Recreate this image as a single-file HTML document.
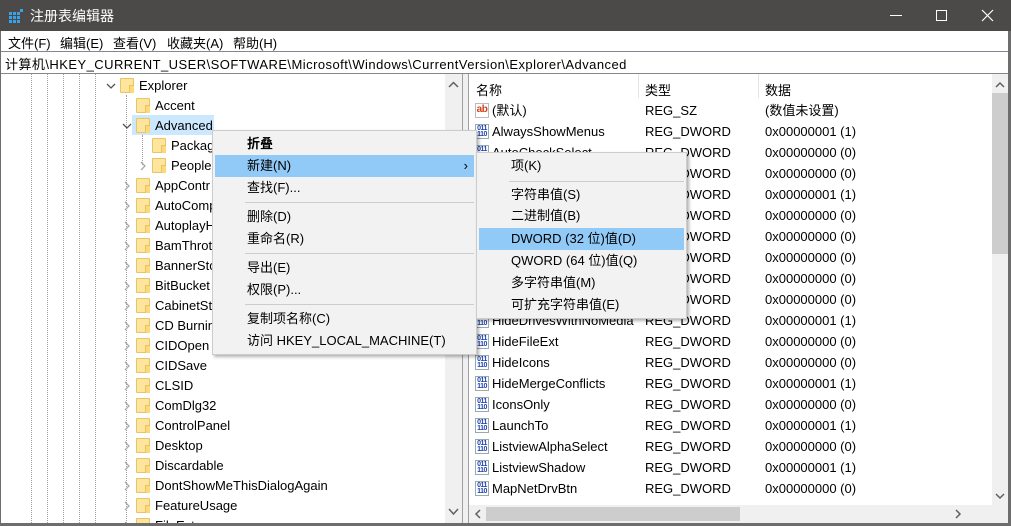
<!DOCTYPE html>
<html style="width:1011px;height:526px;overflow:hidden"><head><meta charset="utf-8"><style>
*{margin:0;padding:0;box-sizing:border-box}
body{width:1011px;height:526px;overflow:hidden;background:#f0f0f0;font-family:"Liberation Sans","Noto Sans CJK SC",sans-serif;font-size:13px;color:#000;position:relative}
.a{position:absolute;white-space:nowrap}
.t{line-height:20px;height:20px}
.fd{position:absolute;width:14px;height:15px;background:#fde59e;border:1px solid #e9c464;border-radius:1px}
.fd:after{content:"";position:absolute;right:-1px;bottom:-1px;width:4px;height:7px;border-left:1px solid #e9c464;border-top:1px solid #e9c464;background:#fbd977}
.dv{position:absolute;width:1px;border-left:1px dotted #a0a0a0}
.ic{position:absolute;width:14px;height:15px;border:1px solid #9aa;background:#fff;font:bold 7px/6px "Liberation Sans",sans-serif;color:#1a3fb0;text-align:center;letter-spacing:-0.5px;padding-top:1px}
.mi{position:absolute;left:0;right:0;height:22px;line-height:22px}
.sep{position:absolute;height:1px;background:#ccc}
</style></head><body>
<div class="a" style="left:0;top:0;width:1011px;height:31px;background:#4b4a48"></div>
<svg class="a" style="left:8px;top:8px" width="16" height="16"><g fill="#3aa0e8"><rect x="1" y="4" width="3" height="3"/><rect x="5" y="4" width="3" height="3"/><rect x="9" y="4" width="3" height="3"/><rect x="1" y="8" width="3" height="3"/><rect x="5" y="8" width="3" height="3"/><rect x="9" y="8" width="3" height="3"/><rect x="1" y="12" width="3" height="3"/><rect x="5" y="12" width="3" height="3"/><rect x="9" y="12" width="3" height="3"/><rect x="12" y="1" width="3" height="3"/></g></svg>
<div class="a" style="left:30px;top:6px;color:#fff;font-size:14px">注册表编辑器</div>
<div class="a" style="left:890px;top:15px;width:12px;height:1px;background:#fff"></div>
<div class="a" style="left:936px;top:10px;width:11px;height:11px;border:1px solid #fff"></div>
<svg class="a" style="left:981px;top:9px" width="13" height="13"><path d="M1 1L12 12M12 1L1 12" stroke="#fff" stroke-width="1.2"/></svg>
<div class="a" style="left:0;top:31px;width:1011px;height:20px;background:#fff"></div>
<div class="a" style="left:8px;top:33px">文件(F)</div>
<div class="a" style="left:60px;top:33px">编辑(E)</div>
<div class="a" style="left:113px;top:33px">查看(V)</div>
<div class="a" style="left:167px;top:33px">收藏夹(A)</div>
<div class="a" style="left:233px;top:33px">帮助(H)</div>
<div class="a" style="left:0;top:51px;width:1011px;height:23px;background:#fff;border:1px solid #828790"></div>
<div class="a" style="left:5px;top:54px;font-size:13px;letter-spacing:0.45px">计算机\HKEY_CURRENT_USER\SOFTWARE\Microsoft\Windows\CurrentVersion\Explorer\Advanced</div>
<div class="a" style="left:1px;top:74px;width:444px;height:449px;background:#fff;overflow:hidden">
<div class="dv" style="left:30px;top:0;height:449px"></div>
<div class="dv" style="left:46px;top:0;height:449px"></div>
<div class="dv" style="left:62px;top:0;height:449px"></div>
<div class="dv" style="left:78px;top:0;height:449px"></div>
<div class="dv" style="left:94px;top:0;height:449px"></div>
<div class="dv" style="left:125px;top:21px;height:428px"></div>
<div class="dv" style="left:141px;top:61px;height:30px"></div>
<div class="a" style="left:131px;top:41px;width:82px;height:20px;background:#cce8ff"></div>
</div>
<div id="rows"></div>
<div class="a" style="left:445px;top:74px;width:17px;height:449px;background:#f0f0f0"></div>
<svg class="a" style="left:448px;top:81px" width="11" height="8"><path d="M1 6L5.5 1.5L10 6" stroke="#606060" fill="none" stroke-width="1.5"/></svg>
<svg class="a" style="left:448px;top:508px" width="11" height="8"><path d="M1 1L5.5 6L10 1" stroke="#606060" fill="none" stroke-width="1.5"/></svg>
<div class="a" style="left:462px;top:74px;width:1px;height:449px;background:#a0a0a0"></div>
<div class="a" style="left:468px;top:74px;width:1px;height:449px;background:#a0a0a0"></div>
<div class="a" style="left:469px;top:74px;width:523px;height:431px;background:#fff"></div>
<div class="a" style="left:476px;top:80px">名称</div>
<div class="a" style="left:645px;top:80px">类型</div>
<div class="a" style="left:765px;top:80px">数据</div>
<div class="a" style="left:638px;top:74px;width:1px;height:24px;background:#e5e5e5"></div>
<div class="a" style="left:758px;top:74px;width:1px;height:24px;background:#e5e5e5"></div>
<div id="lrows"></div>
<div class="a" style="left:992px;top:74px;width:16px;height:431px;background:#f0f0f0"></div>
<div class="a" style="left:992px;top:93px;width:16px;height:161px;background:#cdcdcd"></div>
<svg class="a" style="left:995px;top:81px" width="10" height="7"><path d="M1 6L5 2L9 6" stroke="#606060" fill="none" stroke-width="1.5"/></svg>
<svg class="a" style="left:995px;top:493px" width="10" height="7"><path d="M1 1L5 5L9 1" stroke="#606060" fill="none" stroke-width="1.5"/></svg>
<div class="a" style="left:469px;top:505px;width:539px;height:18px;background:#f0f0f0"></div>
<div class="a" style="left:486px;top:507px;width:254px;height:14px;background:#cdcdcd"></div>
<svg class="a" style="left:474px;top:509px" width="7" height="10"><path d="M6 1L2 5L6 9" stroke="#606060" fill="none" stroke-width="1.5"/></svg>
<svg class="a" style="left:955px;top:509px" width="7" height="10"><path d="M1 1L5 5L1 9" stroke="#606060" fill="none" stroke-width="1.5"/></svg>
<div class="a" style="left:0;top:523px;width:1011px;height:3px;background:#6d6d6d"></div>
<div class="a" style="left:1008px;top:31px;width:3px;height:495px;background:#6d6d6d"></div>
<div class="a" style="left:0;top:31px;width:1px;height:495px;background:#6d6d6d"></div>
<div class="a" style="left:212px;top:130px;width:265px;height:225px;background:#f2f2f2;border:1px solid #ccc;box-shadow:2px 2px 3px rgba(0,0,0,.3)">
<div class="mi" style="top:2px;padding-left:34px;font-weight:bold">折叠</div>
<div class="mi" style="top:24px;padding-left:32px;background:#91c9f7;left:2px;right:2px">新建(N)<span style="position:absolute;right:6px">›</span></div>
<div class="mi" style="top:46px;padding-left:34px">查找(F)...</div>
<div class="sep" style="top:71px;left:32px;right:2px"></div>
<div class="mi" style="top:75px;padding-left:34px">删除(D)</div>
<div class="mi" style="top:97px;padding-left:34px">重命名(R)</div>
<div class="sep" style="top:122px;left:32px;right:2px"></div>
<div class="mi" style="top:126px;padding-left:34px">导出(E)</div>
<div class="mi" style="top:148px;padding-left:34px">权限(P)...</div>
<div class="sep" style="top:173px;left:32px;right:2px"></div>
<div class="mi" style="top:177px;padding-left:34px">复制项名称(C)</div>
<div class="mi" style="top:199px;padding-left:34px">访问 HKEY_LOCAL_MACHINE(T)</div>
</div>
<div class="a" style="left:476px;top:152px;width:211px;height:167px;background:#f2f2f2;border:1px solid #ccc;box-shadow:2px 2px 3px rgba(0,0,0,.3)">
<div class="mi" style="top:2px;padding-left:34px">项(K)</div>
<div class="sep" style="top:28px;left:32px;right:2px"></div>
<div class="mi" style="top:31px;padding-left:34px">字符串值(S)</div>
<div class="mi" style="top:52px;padding-left:34px">二进制值(B)</div>
<div class="mi" style="top:75px;padding-left:32px;background:#91c9f7;left:2px;right:2px">DWORD (32 位)值(D)</div>
<div class="mi" style="top:97px;padding-left:34px">QWORD (64 位)值(Q)</div>
<div class="mi" style="top:119px;padding-left:34px">多字符串值(M)</div>
<div class="mi" style="top:141px;padding-left:34px">可扩充字符串值(E)</div>
</div>
<script>
var t=[["Explorer",0,"v"],["Accent",1,""],["Advanced",1,"v"],["Packag",2,""],["People",2,">"],["AppContr",1,">"],["AutoComp",1,">"],["AutoplayH",1,">"],["BamThrot",1,">"],["BannerSto",1,">"],["BitBucket",1,">"],["CabinetSta",1,">"],["CD Burnin",1,">"],["CIDOpen",1,">"],["CIDSave",1,">"],["CLSID",1,">"],["ComDlg32",1,">"],["ControlPanel",1,">"],["Desktop",1,">"],["Discardable",1,">"],["DontShowMeThisDialogAgain",1,">"],["FeatureUsage",1,">"],["FileExts",1,">"]];
var h="";t.forEach(function(r,i){var y=76+i*20,x=120+r[1]*16;
if(r[2]=="v")h+='<svg class="a" style="left:'+(x-14)+'px;top:'+(y+7)+'px" width="10" height="7"><path d="M1 1L5 5L9 1" stroke="#555" fill="none" stroke-width="1.3"/></svg>';
if(r[2]==">")h+='<svg class="a" style="left:'+(x-12)+'px;top:'+(y+5)+'px" width="7" height="10"><path d="M1 1L5 5L1 9" stroke="#aaa" fill="none" stroke-width="1.3"/></svg>';
h+='<div class="fd" style="left:'+x+'px;top:'+(y+2)+'px"></div><div class="a t" style="left:'+(x+19)+'px;top:'+y+'px">'+r[0]+'</div>';});
document.getElementById("rows").innerHTML=h;
var n=["(默认)","AlwaysShowMenus","AutoCheckSelect","DisablePreviewDesktop","DontPrettyPath","Filter","FolderContentsInfoTip","HideDrivesWithNoMedia0","HideDrivesWithNoMedia1","HideDrivesWithNoMedia2","HideDrivesWithNoMedia","HideFileExt","HideIcons","HideMergeConflicts","IconsOnly","LaunchTo","ListviewAlphaSelect","ListviewShadow","MapNetDrvBtn","NavPaneShowAllFolders"];
var v=["(数值未设置)","1","0","0","1","0","0","0","0","0","1","0","0","1","0","1","0","1","0","0"];
var l="";n.forEach(function(s,i){var y=101+i*21;if(y>495)return;
var nm=s.replace(/\d$/,"");
if(i==0)l+='<div class="ic" style="left:475px;top:'+(y+2)+'px;color:#d0401a;font-size:10px;line-height:10px;border-color:#bbb">ab</div>';
else l+='<div class="ic" style="left:475px;top:'+(y+2)+'px">011<br>110</div>';
l+='<div class="a t" style="left:492px;top:'+y+'px;background:#fff;padding-right:2px">'+nm+'</div>';
l+='<div class="a t" style="left:645px;top:'+y+'px">'+(i==0?"REG_SZ":"REG_DWORD")+'</div>';
l+='<div class="a t" style="left:765px;top:'+y+'px">'+(i==0?v[0]:"0x0000000"+v[i]+" ("+v[i]+")")+'</div>';});
document.getElementById("lrows").innerHTML=l;
</script>
</body></html>
